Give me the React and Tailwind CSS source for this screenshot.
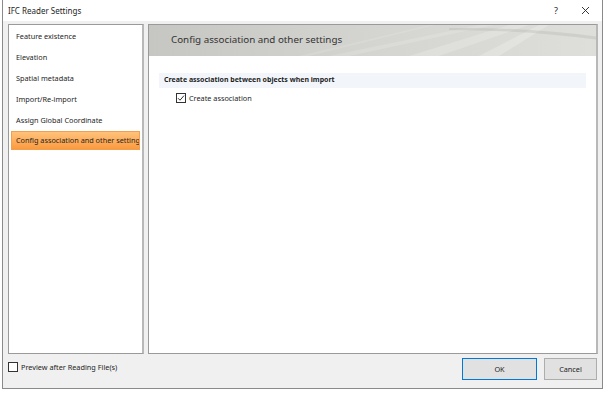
import React from 'react';

const navItems = [
  'Feature existence',
  'Elevation',
  'Spatial metadata',
  'Import/Re-import',
  'Assign Global Coordinate',
  'Config association and other setting',
];

function CheckBox({ checked }) {
  return (
    <span className="flex h-[10px] w-[10px] items-center justify-center border border-[#333] bg-white">
      {checked && (
        <svg width="8" height="8" viewBox="0 0 8 8">
          <path d="M1 4.2 L3 6.2 L7 1.6" fill="none" stroke="#333" strokeWidth="1" />
        </svg>
      )}
    </span>
  );
}

export default function App() {
  return (
    <div
      className="h-[393px] w-[606px] overflow-hidden bg-white text-[#1e1e1e]"
      style={{ fontFamily: '"Noto Sans", "Open Sans", sans-serif' }}
    >
      <div className="ml-[2px] flex h-[389px] w-[601px] flex-col border-x border-b border-[#8a8a8a] bg-[#f0f0f0]">
        {/* title bar */}
        <div className="flex h-[21px] shrink-0 items-center bg-white pl-[5px]">
          <span className="text-[8px]">IFC Reader Settings</span>
          <span className="ml-auto mr-[23px] text-[9px]">?</span>
          <svg width="9" height="9" viewBox="0 0 9 9" className="mr-[12px]">
            <path d="M1 1 L8 8 M8 1 L1 8" stroke="#222" strokeWidth="0.9" />
          </svg>
        </div>

        {/* body */}
        <div className="mt-[3px] flex h-[330px] gap-[4px] pl-[5px] pr-[4px]">
          <div className="w-[136px] border border-[#9a9a9a] border-r-2 border-r-[#b8b8b8] bg-white pt-[1px]">
            {navItems.map((item, i) => {
              const active = i === navItems.length - 1;
              return (
                <div
                  key={item}
                  className={
                    active
                      ? 'mx-[2px] flex h-[19px] items-center whitespace-nowrap overflow-hidden border border-[#f0a050] bg-gradient-to-b from-[#ffc27a] to-[#fb9a3c] pl-[4px] text-[7.3px]'
                      : 'flex h-[21px] items-center pl-[7px] text-[7.3px]'
                  }
                >
                  {item}
                </div>
              );
            })}
          </div>

          <div className="flex flex-1 flex-col border border-[#9a9a9a] border-r-2 border-r-[#b8b8b8] bg-white">
            <div className="relative flex h-[31px] items-center overflow-hidden bg-gradient-to-r from-[#c6c6c2] via-[#d4d4d0] to-[#dededa] pl-[22px]">
              <svg className="absolute inset-0" width="450" height="31" viewBox="0 0 450 31" preserveAspectRatio="none">
                <path d="M180 31 L330 0 L345 0 L200 31 Z" fill="#ffffff" opacity="0.15" />
                <path d="M260 31 L360 0 L380 0 L290 31 Z" fill="#ffffff" opacity="0.2" />
                <path d="M330 31 L390 0 L400 0 L350 31 Z" fill="#ffffff" opacity="0.22" />
                <path d="M300 3 Q380 2 450 12 L450 15 Q380 5 300 5 Z" fill="#a4a4a0" opacity="0.25" />
                <path d="M150 31 L280 0 L286 0 L160 31 Z" fill="#ffffff" opacity="0.12" />
              </svg>
              <span className="relative text-[9.8px] text-[#333]">Config association and other settings</span>
            </div>
            <div className="px-[10px] pt-[17px]">
              <div className="flex h-[15px] items-center bg-[#f2f6fb] pl-[5px] text-[7px] font-bold">
                Create association between objects when import
              </div>
              <div className="mt-[5px] flex items-center gap-[3px] pl-[17px] text-[7.3px]">
                <CheckBox checked />
                <span>Create association</span>
              </div>
            </div>
          </div>
        </div>

        {/* footer */}
        <div className="flex flex-1 items-start pl-[5px] pr-[5px] pt-[4px]">
          <div className="mt-[4px] flex items-center gap-[3px] text-[7.3px]">
            <CheckBox />
            <span>Preview after Reading File(s)</span>
          </div>
          <button className="ml-auto h-[22px] w-[75px] border border-[#0078d7] bg-[#e1e1e1] text-[7.3px]">OK</button>
          <button className="ml-[7px] h-[22px] w-[53px] border border-[#adadad] bg-[#e1e1e1] text-[7.3px]">Cancel</button>
        </div>
      </div>
    </div>
  );
}
